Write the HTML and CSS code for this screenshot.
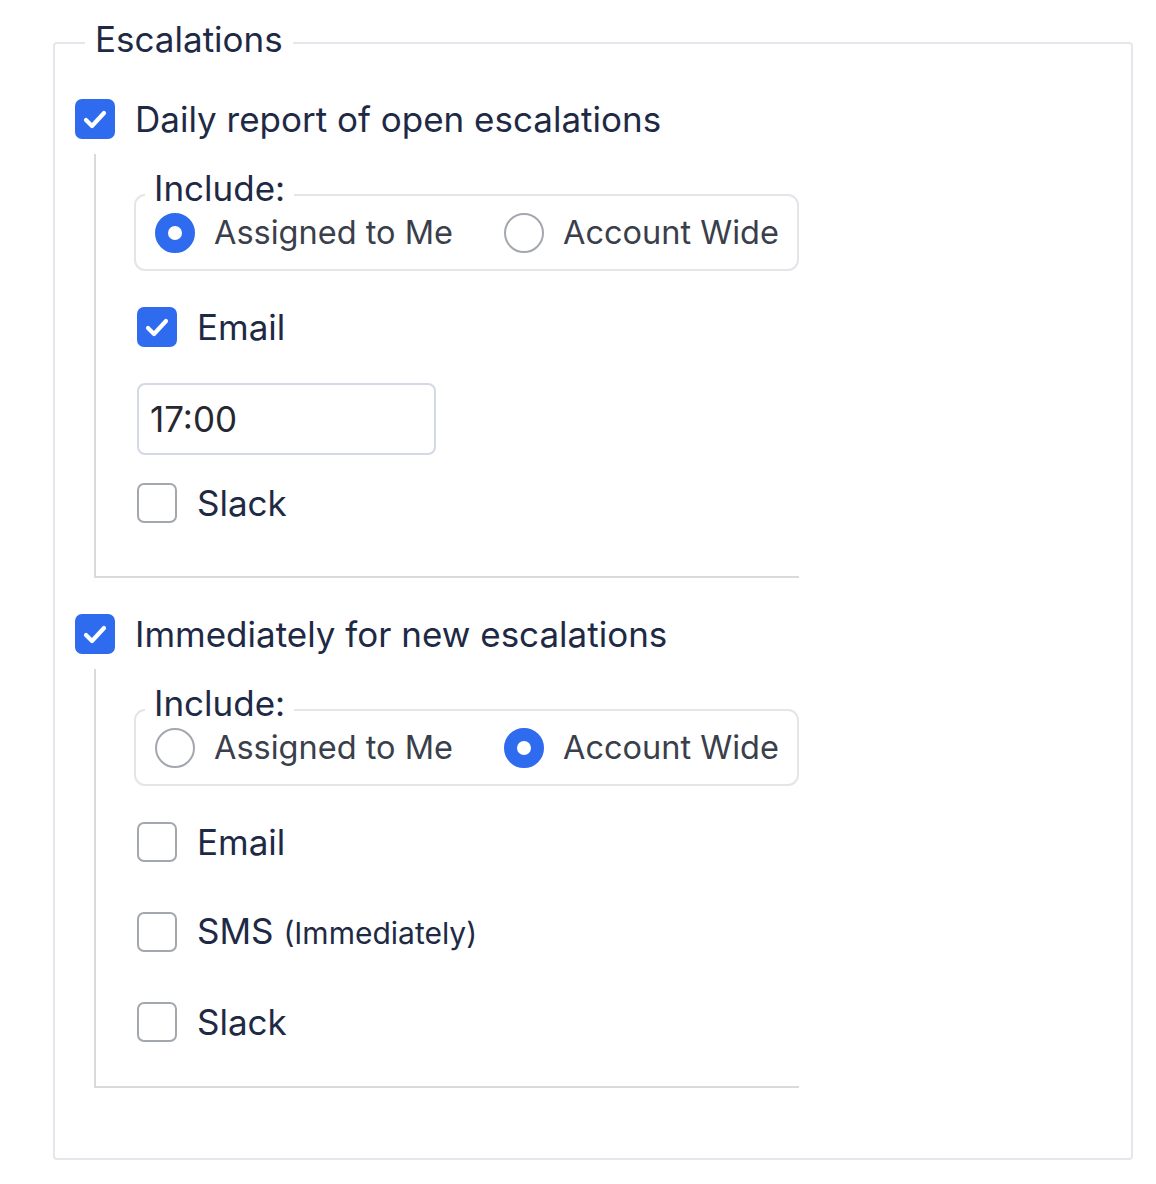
FILE: index.html
```html
<!DOCTYPE html>
<html>
<head>
<meta charset="utf-8">
<link rel="stylesheet" href="styles.css">
</head>
<body>
<fieldset class="panel">
  <legend class="panel-legend">Escalations</legend>

  <div class="group">
    <label class="check top">
      <span class="box on"><svg viewBox="0 0 40 40"><path d="M11 21 L17 27 L29 14"/></svg></span>
      <span class="lbl">Daily report of open escalations</span>
    </label>
    <div class="sub">
      <fieldset class="include">
        <legend class="inc-legend">Include:</legend>
        <div class="radios">
          <label class="radio"><span class="dot on"></span><span class="rlbl">Assigned to Me</span></label>
          <label class="radio"><span class="dot"></span><span class="rlbl">Account Wide</span></label>
        </div>
      </fieldset>
      <label class="check first">
        <span class="box on"><svg viewBox="0 0 40 40"><path d="M11 21 L17 27 L29 14"/></svg></span>
        <span class="lbl">Email</span>
      </label>
      <div class="time">17:00</div>
      <label class="check after-time">
        <span class="box"></span>
        <span class="lbl">Slack</span>
      </label>
    </div>
  </div>

  <div class="group second">
    <label class="check top">
      <span class="box on"><svg viewBox="0 0 40 40"><path d="M11 21 L17 27 L29 14"/></svg></span>
      <span class="lbl">Immediately for new escalations</span>
    </label>
    <div class="sub sub2">
      <fieldset class="include">
        <legend class="inc-legend">Include:</legend>
        <div class="radios">
          <label class="radio"><span class="dot"></span><span class="rlbl">Assigned to Me</span></label>
          <label class="radio"><span class="dot on"></span><span class="rlbl">Account Wide</span></label>
        </div>
      </fieldset>
      <label class="check first">
        <span class="box"></span>
        <span class="lbl">Email</span>
      </label>
      <label class="check spaced">
        <span class="box"></span>
        <span class="lbl">SMS <small class="note">(Immediately)</small></span>
      </label>
      <label class="check spaced">
        <span class="box"></span>
        <span class="lbl">Slack</span>
      </label>
    </div>
  </div>
</fieldset>
</body>
</html>
```

FILE: styles.css
```css
* { box-sizing: border-box; }

body {
  margin: 0;
  background: #ffffff;
  font-family: Inter, "Noto Sans", sans-serif;
  color: #1e2a45;
}

.panel {
  margin: 19px 0 0 53px;
  width: 1080px;
  border: 2px solid #e6e7ec;
  border-radius: 4px;
  padding: 32px 0 70px 20px;
  min-width: 0;
}

.panel-legend {
  font-size: 35px;
  line-height: 40px;
  padding: 0 10px 8px 10px;
  margin-left: 10px;
  color: #1e2a45;
  white-space: nowrap;
}

.check {
  display: flex;
  align-items: center;
  height: 40px;
  gap: 20px;
  font-size: 35px;
  line-height: 40px;
  white-space: nowrap;
}

.check.top { margin: 0; }

.box {
  flex: none;
  width: 40px;
  height: 40px;
  border: 2px solid #a3a7ae;
  border-radius: 7px;
  background: #fff;
  display: flex;
  align-items: center;
  justify-content: center;
}

.box.on {
  background: #2f6bef;
  border-color: #2f6bef;
}

.box svg {
  width: 40px;
  height: 40px;
  flex: none;
}

.box svg path {
  fill: none;
  stroke: #ffffff;
  stroke-width: 4.2;
  stroke-linecap: round;
  stroke-linejoin: round;
}

.sub {
  margin: 15px 0 0 19px;
  width: 705px;
  border-left: 2px solid #d8dade;
  border-bottom: 2px solid #d8dade;
  padding: 22px 0 53px 38px;
}

.sub2 {
  padding-bottom: 44px;
}

.group.second {
  margin-top: 36px;
}

.include {
  margin: 0;
  border: 2px solid #e3e5e9;
  border-radius: 11px;
  padding: 0 20px 16px 19px;
  min-width: 0;
}

.inc-legend {
  font-size: 35px;
  line-height: 24px;
  padding: 0 9px 13px 9px;
  margin-left: -10px;
  color: #1e2a45;
  white-space: nowrap;
}

.radios {
  display: flex;
  align-items: center;
  gap: 51px;
  height: 40px;
}

.radio {
  display: flex;
  align-items: center;
  gap: 19px;
  font-size: 32.5px;
  line-height: 40px;
  color: #3a3f4b;
  white-space: nowrap;
}

.dot {
  flex: none;
  width: 40px;
  height: 40px;
  border-radius: 50%;
  border: 2px solid #a3a7ae;
  background: #fff;
}

.dot.on {
  border: 13px solid #2f6bef;
}

.check.first {
  margin: 36px 0 0 3px;
}

.check.after-time {
  margin: 28px 0 0 3px;
}

.check.spaced {
  margin: 50px 0 0 3px;
}

.time {
  margin: 36px 0 0 3px;
  width: 299px;
  height: 72px;
  border: 2px solid #d3dae6;
  border-radius: 8px;
  padding-left: 11px;
  font-size: 35px;
  line-height: 68px;
  color: #27272f;
}

.note {
  font-size: 30px;
  margin-left: 0;
}
```
